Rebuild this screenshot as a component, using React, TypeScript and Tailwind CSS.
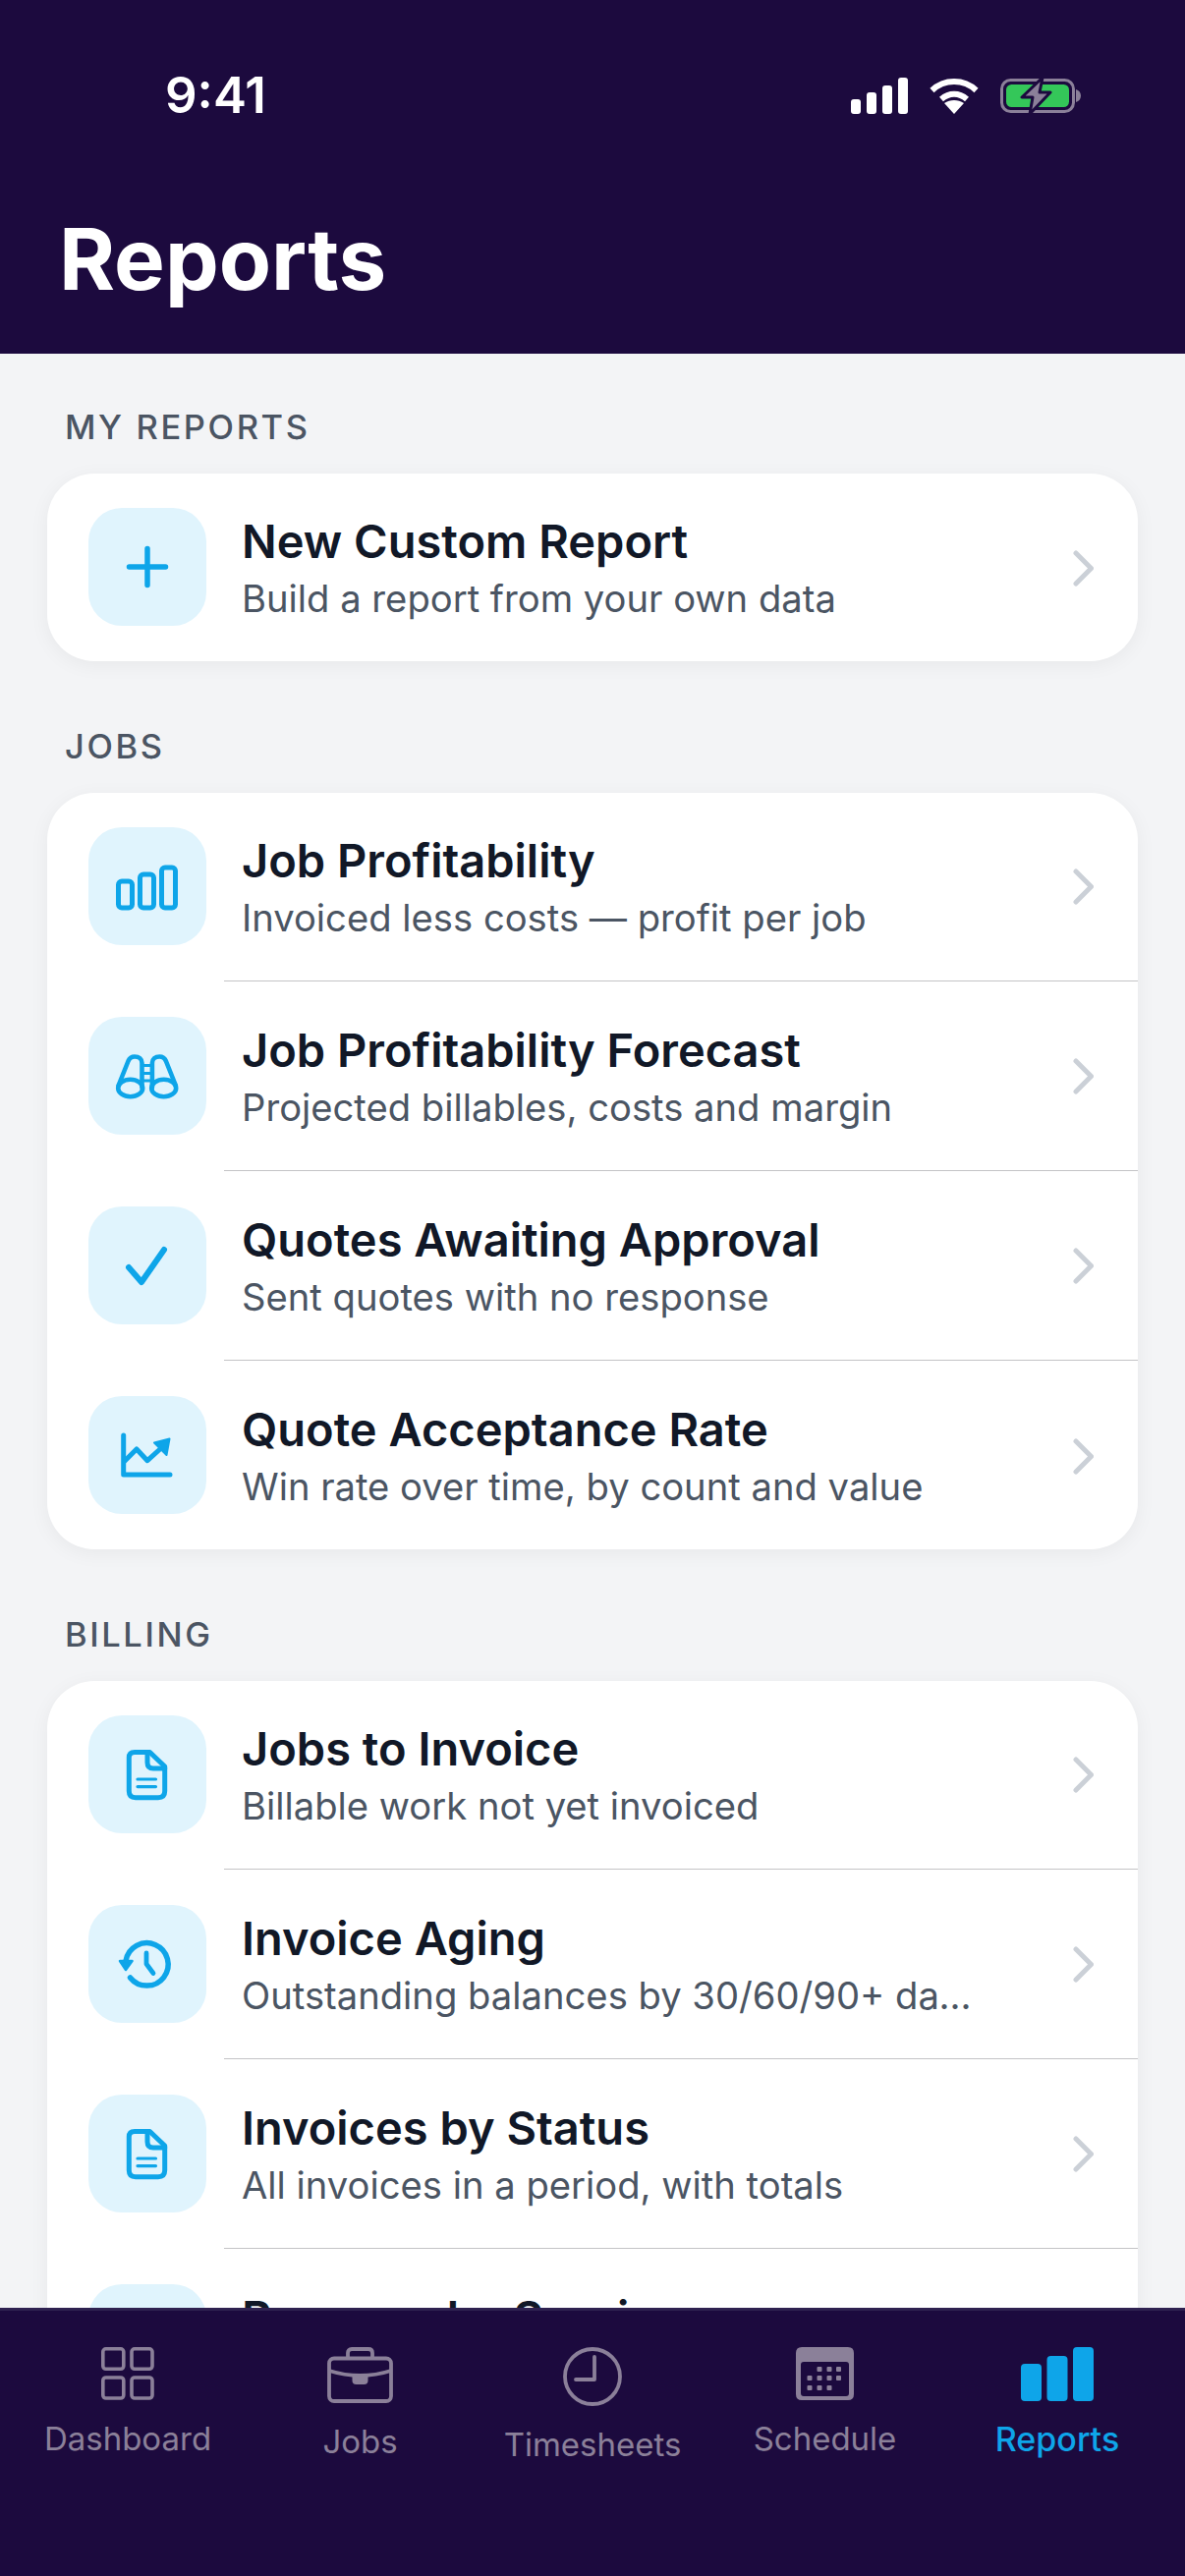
import React from 'react';

const FONT = "font-['Inter',sans-serif]";

// Row icons are all drawn on a 72x72 box, centred in the tile
const PlusIcon = () => (
  <svg width="72" height="72" viewBox="0 0 72 72" fill="none" stroke="#0ea5e9" strokeWidth="5.5" strokeLinecap="round">
    <path d="M36 17.5V54.5M17.5 36H54.5" />
  </svg>
);

const BarsOutlineIcon = () => (
  <svg width="72" height="72" viewBox="0 0 72 72" fill="none" stroke="#0ea5e9" strokeWidth="5">
    <rect x="6.5" y="31" width="14" height="27" rx="3.5" />
    <rect x="28.5" y="24" width="14" height="34" rx="3.5" />
    <rect x="50.5" y="17" width="14" height="41" rx="3.5" />
  </svg>
);

const BinocularsIcon = () => (
  <svg width="72" height="72" viewBox="0 0 72 72" fill="none" stroke="#0ea5e9" strokeWidth="4.6" strokeLinecap="round" strokeLinejoin="round">
    <ellipse cx="18.7" cy="48.5" rx="12.5" ry="8.8" />
    <ellipse cx="52.7" cy="48.5" rx="12.5" ry="8.8" />
    <path d="M6.5 46L16.5 21C18 17.5 20 16.5 23 16.5C27.5 16.5 30.5 19 30.5 23V48" />
    <path d="M64.9 46L54.9 21C53.4 17.5 51.4 16.5 48.4 16.5C43.9 16.5 40.9 19 40.9 23V48" />
    <path d="M30.5 25.5H40.9M30.5 33.5H40.9M30.5 41H40.9" strokeWidth="2.8" />
  </svg>
);

const CheckIcon = () => (
  <svg width="72" height="72" viewBox="0 0 72 72" fill="none" stroke="#0ea5e9" strokeWidth="6" strokeLinecap="round" strokeLinejoin="round">
    <path d="M17 38L30 53L53 20" />
  </svg>
);

const ChartIcon = () => (
  <svg width="72" height="72" viewBox="0 0 72 72" fill="none" stroke="#0ea5e9" strokeWidth="5" strokeLinecap="round" strokeLinejoin="round">
    <path d="M11.7 16V56H59" />
    <path d="M13 42L25 30L36 41.7L50 29" />
    <path d="M43 23.5L58.5 19.5L55.5 36Z" fill="#0ea5e9" strokeWidth="2" />
  </svg>
);

const DocIcon = () => (
  <svg width="72" height="72" viewBox="0 0 72 72" fill="none" stroke="#0ea5e9" strokeWidth="5" strokeLinecap="round" strokeLinejoin="round">
    <path d="M23 13.5H38.5L53.7 28V53Q53.7 59.7 47 59.7H24Q17.3 59.7 17.3 53V19Q17.3 13.5 23 13.5Z" />
    <path d="M36 13.5V24Q36 30 42 30H53.7" />
    <path d="M26 41H44.5M26 48.6H44.5" strokeWidth="3.2" />
  </svg>
);

const HistoryIcon = () => (
  <svg width="72" height="72" viewBox="0 0 72 72" fill="none" stroke="#0ea5e9" strokeWidth="5.5" strokeLinecap="round" strokeLinejoin="round">
    <path d="M14 33A21.7 21.7 0 1 1 18.5 50" />
    <path d="M35 25V36L42 45.5" strokeWidth="4.8" />
    <path d="M8 33H20.5L14 42Z" fill="#0ea5e9" strokeWidth="2.5" />
  </svg>
);

const Chevron = () => (
  <svg width="21" height="37" viewBox="0 0 21 37" fill="none" stroke="#cbd0d7" strokeWidth="5" strokeLinecap="round" strokeLinejoin="round" className="shrink-0">
    <path d="M3 3L18.5 18.5L3 34" />
  </svg>
);

type Report = { title: string; sub: string; icon: React.ReactNode };

const sections: { label: string; rows: Report[] }[] = [
  {
    label: 'MY REPORTS',
    rows: [{ title: 'New Custom Report', sub: 'Build a report from your own data', icon: <PlusIcon /> }],
  },
  {
    label: 'JOBS',
    rows: [
      { title: 'Job Profitability', sub: 'Invoiced less costs — profit per job', icon: <BarsOutlineIcon /> },
      { title: 'Job Profitability Forecast', sub: 'Projected billables, costs and margin', icon: <BinocularsIcon /> },
      { title: 'Quotes Awaiting Approval', sub: 'Sent quotes with no response', icon: <CheckIcon /> },
      { title: 'Quote Acceptance Rate', sub: 'Win rate over time, by count and value', icon: <ChartIcon /> },
    ],
  },
  {
    label: 'BILLING',
    rows: [
      { title: 'Jobs to Invoice', sub: 'Billable work not yet invoiced', icon: <DocIcon /> },
      { title: 'Invoice Aging', sub: 'Outstanding balances by 30/60/90+ days overdue', icon: <HistoryIcon /> },
      { title: 'Invoices by Status', sub: 'All invoices in a period, with totals', icon: <DocIcon /> },
      { title: 'Revenue by Service', sub: 'Invoiced revenue grouped by service', icon: <BarsOutlineIcon /> },
    ],
  },
];

const Row = ({ row, last }: { row: Report; last: boolean }) => (
  <div className={`flex pl-[42px] ${last ? 'h-[191px]' : 'h-[193px]'}`}>
    <div className="shrink-0 pt-[35px]">
      <div className="flex h-[120px] w-[120px] items-center justify-center rounded-[34px] bg-[#e0f4fd]">{row.icon}</div>
    </div>
    <div className={`ml-[18px] flex h-[192px] min-w-0 flex-1 items-center pl-[18px] pr-[45px] ${last ? '' : 'border-b border-[#c4c4c6]'}`}>
      <div className="min-w-0 flex-1 pr-[96px] pt-[3px]">
        <div className="text-[47px] leading-[59px] font-semibold text-[#111827]">{row.title}</div>
        <div className="truncate text-[38.2px] leading-[58px] text-[#4b5563]">{row.sub}</div>
      </div>
      <Chevron />
    </div>
  </div>
);

const NavItem = ({ label, icon, active }: { label: string; icon: React.ReactNode; active?: boolean }) => (
  <div className="flex w-[236px] flex-col items-center">
    {icon}
    <span className={`mt-[19px] leading-[40px] ${active ? 'text-[34px] font-medium text-[#0ea5e9]' : 'text-[33px] text-[#8b8099]'}`}>{label}</span>
  </div>
);

export default function App() {
  return (
    <div className={`${FONT} flex h-[2622px] w-[1206px] flex-col overflow-hidden bg-[#f3f4f6]`}>
      {/* Header */}
      <div className="h-[360px] shrink-0 bg-[#1c0a3e] text-white">
        <div className="flex h-[195px] items-center justify-between pl-[168px] pr-[106px]">
          <span className="text-[51px] font-semibold">9:41</span>
          <div className="flex items-center gap-[22px]">
            <svg width="58" height="37" viewBox="0 0 58 37" fill="#fff">
              <rect x="0" y="22" width="10" height="15" rx="3" />
              <rect x="16" y="15" width="10" height="22" rx="3" />
              <rect x="32" y="8" width="10" height="29" rx="3" />
              <rect x="48" y="0" width="10" height="37" rx="3" />
            </svg>
            <svg width="50" height="37" viewBox="0 0 50 37" fill="none" stroke="#fff" strokeWidth="6">
              <path d="M2.5 13C15 1 35 1 47.5 13" />
              <path d="M12 22C20 15 30 15 38 22" />
              <path d="M15 26C21 22 29 22 35 26L25 37Z" fill="#fff" stroke="none" />
            </svg>
            <svg width="82" height="39" viewBox="0 0 82 39" fill="none">
              <rect x="1.5" y="3.5" width="73" height="32" rx="9" stroke="#8b8099" strokeWidth="3" />
              <rect x="6" y="8" width="64" height="23" rx="5.5" fill="#34c759" />
              <path d="M77 13C80 14 82 16 82 19.5C82 23 80 25 77 26Z" fill="#8b8099" />
              <path d="M43 1L22 21H33L30 38L51 16H40Z" fill="#8b8099" stroke="#1c0a3e" strokeWidth="3" strokeLinejoin="round" />
            </svg>
          </div>
        </div>
        <h1 className="mt-[18px] pl-[60px] text-[87px] leading-[102px] font-bold">Reports</h1>
      </div>

      {/* List, runs on under the tab bar */}
      <div className="min-h-0 flex-1 overflow-hidden px-[48px] pt-[55px]">
        {sections.map((s) => (
          <div key={s.label} className="mb-[67px]">
            <div className="mb-[27px] pl-[18px] text-[34.5px] leading-[40px] font-medium tracking-[2.6px] text-[#4b5563]">{s.label}</div>
            <div className="overflow-hidden rounded-[48px] bg-white shadow-[0_4px_20px_rgba(0,0,0,0.05)]">
              {s.rows.map((row, i) => (
                <Row key={row.title} row={row} last={i === s.rows.length - 1} />
              ))}
            </div>
          </div>
        ))}
      </div>

      {/* Tab bar */}
      <div className="flex h-[273px] shrink-0 items-start justify-between border-t-[3px] border-[#2e2150] bg-[#1c0a3e] px-[12px] pt-[37px]">
        <NavItem
          label="Dashboard"
          icon={
            <svg width="54" height="54" viewBox="0 0 54 54" fill="none" stroke="#8b8099" strokeWidth="3.6">
              <rect x="1.8" y="1.8" width="21" height="20.5" rx="3" />
              <rect x="31" y="1.8" width="21" height="20.5" rx="3" />
              <rect x="1.8" y="31" width="21" height="21" rx="3" />
              <rect x="31" y="31" width="21" height="21" rx="3" />
            </svg>
          }
        />
        <NavItem
          label="Jobs"
          icon={
            <svg width="67" height="57" viewBox="0 0 67 57" fill="none" stroke="#8b8099" strokeWidth="3.8" strokeLinejoin="round">
              <rect x="2" y="11.5" width="63" height="43.5" rx="5" />
              <path d="M21 11V6Q21 2 25 2H42Q46 2 46 6V11" />
              <path d="M2 24Q33.5 34 65 24" />
              <path d="M25.5 29H41.5V34Q41.5 38 37.5 38H29.5Q25.5 38 25.5 34Z" fill="#8b8099" stroke="none" />
            </svg>
          }
        />
        <NavItem
          label="Timesheets"
          icon={
            <svg width="60" height="60" viewBox="0 0 60 60" fill="none" stroke="#8b8099" strokeWidth="3.8" strokeLinecap="round" strokeLinejoin="round">
              <circle cx="30" cy="30" r="28" />
              <path d="M32 10V33H13" />
            </svg>
          }
        />
        <NavItem
          label="Schedule"
          icon={
            <svg width="59" height="54" viewBox="0 0 59 54" fill="#8b8099">
              <path fillRule="evenodd" d="M6 0H53Q59 0 59 6V48Q59 54 53 54H6Q0 54 0 48V6Q0 0 6 0ZM8 15Q5 15 5 18V47Q5 50 8 50H51Q54 50 54 47V18Q54 15 51 15Z" />
              <rect x="21.5" y="20" width="5" height="5" rx="1" />
              <rect x="31.5" y="20" width="5" height="5" rx="1" />
              <rect x="41" y="20" width="5" height="5" rx="1" />
              <rect x="11.5" y="29" width="5" height="5" rx="1" />
              <rect x="21.5" y="29" width="5" height="5" rx="1" />
              <rect x="31.5" y="29" width="5" height="5" rx="1" />
              <rect x="41" y="29" width="5" height="5" rx="1" />
              <rect x="11.5" y="39" width="5" height="5" rx="1" />
              <rect x="21.5" y="39" width="5" height="5" rx="1" />
              <rect x="31.5" y="39" width="5" height="5" rx="1" />
            </svg>
          }
        />
        <NavItem
          label="Reports"
          active
          icon={
            <svg width="74" height="55" viewBox="0 0 74 55" fill="#0ea5e9">
              <rect x="0" y="17" width="21" height="38" rx="4" />
              <rect x="26.5" y="9" width="21" height="46" rx="4" />
              <rect x="53" y="0" width="21" height="55" rx="4" />
            </svg>
          }
        />
      </div>
    </div>
  );
}
